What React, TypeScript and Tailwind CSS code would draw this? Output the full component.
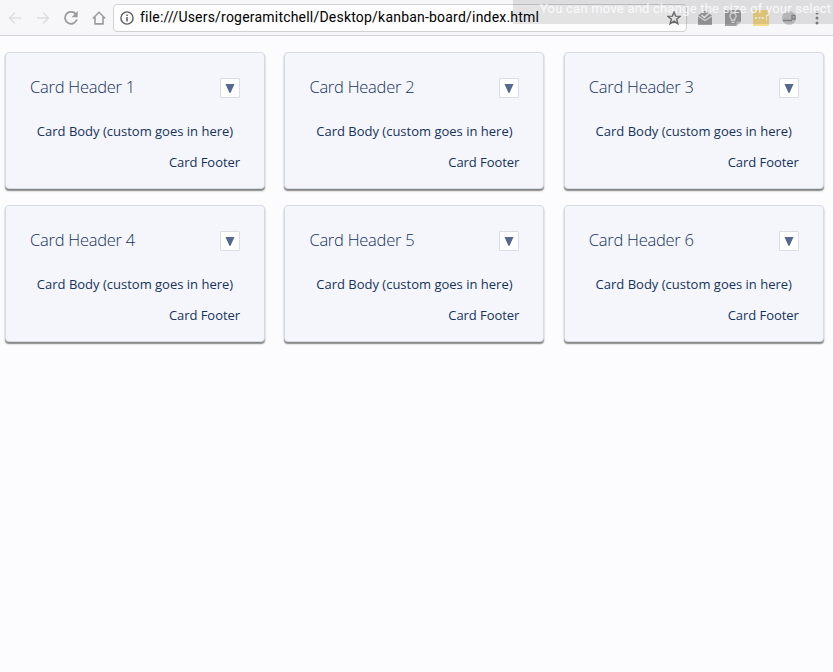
const cards = [1, 2, 3, 4, 5, 6];

function Card({ n }: { n: number }) {
  return (
    <article className="relative h-[137px] w-[260px] rounded-[4px] border border-[#d5dbe5] bg-[#f4f6fb] px-6 shadow-[0_2px_1.5px_rgba(0,0,0,0.48)]">
      <header className="flex h-[70px] items-center justify-between">
        <h2 className="whitespace-nowrap pb-[2px] text-[16.5px] font-light tracking-[-0.25px] text-[#16325c]">
          Card Header {n}
        </h2>
        <button className="flex h-5 w-5 items-center justify-center rounded-[1px] border border-[#d8dde6] bg-white">
          <svg width="10" height="9" viewBox="0 0 10 9" fill="#54698d">
            <path d="M.5 0H9.5L5.6 8.8H4.4Z" />
          </svg>
        </button>
      </header>
      <div className="flex h-[18px] items-center justify-center whitespace-nowrap text-[13px] text-[#16325c]">
        Card Body (custom goes in here)
      </div>
      <footer className="mt-[13px] flex h-[18px] items-center justify-end whitespace-nowrap text-[13px] tracking-[-0.05px] text-[#16325c]">
        Card Footer
      </footer>
    </article>
  );
}

function Toolbar() {
  return (
    <div className="relative h-9 overflow-hidden border-b border-[#d4d4d8] bg-[#f7f7f9]">
      <div className="flex h-[35px] items-center">
        <svg className="ml-2 shrink-0" width="14" height="14" viewBox="0 0 14 14" fill="none" stroke="#dedee0" strokeWidth="1.5">
          <path d="M13 7H1.5M7 1.5L1.5 7L7 12.5" />
        </svg>
        <svg className="ml-[14px] shrink-0" width="14" height="14" viewBox="0 0 14 14" fill="none" stroke="#dedee0" strokeWidth="1.5">
          <path d="M1 7H12.5M7 1.5L12.5 7L7 12.5" />
        </svg>
        <svg className="ml-[14px] shrink-0" width="14" height="14" viewBox="0 0 14 14" fill="none" stroke="#9c9c9e" strokeWidth="1.8">
          <path d="M11.8 3.1A6 6 0 1 0 12.8 8.5" />
          <path d="M13.7 0V6.2H7.5Z" fill="#9c9c9e" stroke="none" />
        </svg>
        <svg className="ml-[14px] shrink-0" width="14" height="14" viewBox="0 0 14 14" fill="none" stroke="#9c9c9e" strokeWidth="1.6">
          <path d="M.8 7.5L7 1.3L13.2 7.5M3 6V12.9H11V6" />
        </svg>
        <div className="ml-[7px] flex h-[28px] w-[574px] shrink-0 items-center rounded-[4px] border border-[#d2d2d5] bg-[#fdfdfe]">
          <svg className="ml-[6px] shrink-0" width="14" height="14" viewBox="0 0 14 14" fill="none" stroke="#5d5d60">
            <circle cx="7" cy="7" r="6.1" strokeWidth="1.4" />
            <path d="M7 6V10.6M7 3.4V5" strokeWidth="1.5" />
          </svg>
          <span className="ml-[6px] w-[399px] shrink-0 whitespace-nowrap font-['Roboto',sans-serif] text-[14px] tracking-[0.205px] text-black">
            file:///Users/rogeramitchell/Desktop/kanban-board/index.html
          </span>
          <svg className="relative z-10 ml-[128px] shrink-0" width="14" height="14" viewBox="0 0 14 14" fill="none" stroke="#68686a" strokeWidth="1.4">
            <path d="M7 1L8.6 5.1L13.2 5.3L9.6 8.2L10.9 12.8L7 10.2L3.1 12.8L4.4 8.2L.8 5.3L5.4 5.1Z" />
          </svg>
        </div>
        <svg className="ml-[10px] shrink-0" width="16" height="16" viewBox="0 0 16 16">
          <path d="M1 5.5L8 .5L15 5.5V15H1Z" fill="#a0a0a2" />
          <path d="M1 6L8 10.5L15 6" fill="none" stroke="#e8e8e8" strokeWidth="1.1" />
          <path d="M4.5 5L7.3 7.5L13 2.5" fill="none" stroke="#f4f4f4" strokeWidth="1.6" />
        </svg>
        <svg className="ml-3 shrink-0" width="16" height="16" viewBox="0 0 16 16">
          <path d="M0 0H16V11.5L11.5 16H0Z" fill="#a0a0a2" />
          <path d="M11.5 16V11.5H16Z" fill="#c9c9ca" />
          <path d="M6.3 10.2V8.9C3.6 6.8 5 2.8 8 2.8S12.4 6.8 9.7 8.9V10.2ZM6.5 12.3H9.5" fill="none" stroke="#f0f0f0" strokeWidth="1.2" />
        </svg>
        <svg className="ml-3 shrink-0" width="16" height="16" viewBox="0 0 16 16">
          <rect width="16" height="16" rx="1.5" fill="#f7da86" />
          <path d="M2 8H12" stroke="#fff9e4" strokeWidth="2" strokeDasharray="2 1.4" />
          <path d="M13.5 5.5V10.5" stroke="#fff9e4" />
        </svg>
        <svg className="ml-3 shrink-0" width="16" height="16" viewBox="0 0 16 16">
          <circle cx="8" cy="8" r="7" fill="#cacacc" />
          <path d="M2 10.5H11M11 5.5H14V9H11Z" fill="none" stroke="#8c8c8e" strokeWidth="1.3" />
        </svg>
        <svg className="ml-[18px] shrink-0" width="4" height="14" viewBox="0 0 4 14" fill="#858588">
          <circle cx="2" cy="2" r="1.5" />
          <circle cx="2" cy="7" r="1.5" />
          <circle cx="2" cy="12" r="1.5" />
        </svg>
      </div>
      <div className="absolute top-0 left-[513px] h-6 w-[320px] bg-black/10 pl-[27px] font-['Roboto',sans-serif] text-[13px] leading-[18px] tracking-[0.22px] whitespace-nowrap text-white/80">
        You can move and change the size of your select
      </div>
    </div>
  );
}

export default function App() {
  return (
    <div className="h-[672px] w-[833px] overflow-hidden bg-[#fcfcfe] font-['Open_Sans',sans-serif]">
      <Toolbar />
      <main className="grid grid-cols-[repeat(3,260px)] gap-x-[19.4px] gap-y-4 pt-4 pl-[5px]">
        {cards.map((n) => (
          <Card key={n} n={n} />
        ))}
      </main>
    </div>
  );
}
